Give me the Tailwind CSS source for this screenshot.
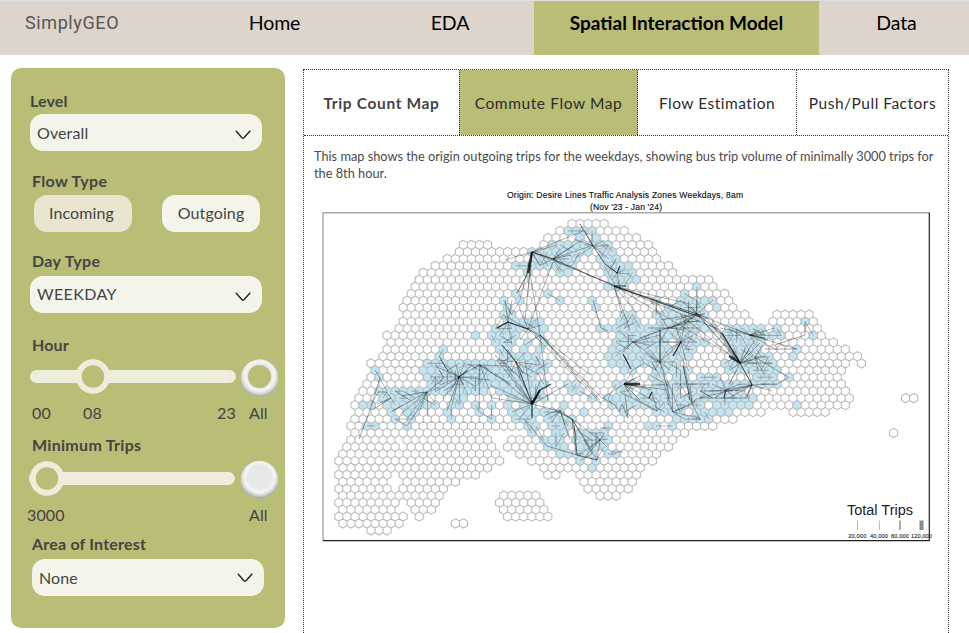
<!DOCTYPE html>
<html lang="en">
<head>
<meta charset="utf-8">
<title>SimplyGEO</title>
<script src="https://cdn.jsdelivr.net/npm/@tailwindcss/browser@4"></script>
</head>
<body class="w-[969px] h-[633px] overflow-hidden bg-white font-['Lato',sans-serif] text-[#444]">
<header class="flex h-[55px] border-t border-[#dcdfe2] bg-[#ddd4cb] text-[20px] leading-[43px] text-black">
  <div class="w-[183px] pl-[25px] font-['Roboto',sans-serif] text-[18px] tracking-[0.6px] text-[#585653]">SimplyGEO</div>
  <nav class="flex flex-1">
    <a class="w-[182px] pl-[1px] text-center text-[19.5px] tracking-[-0.1px]">Home</a>
    <a class="w-[169px] pl-[1px] text-center text-[19.5px] tracking-[-0.1px]">EDA</a>
    <a class="h-[54px] w-[285px] bg-[#babd76] text-center text-[19px] font-bold">Spatial Interaction Model</a>
    <a class="w-[150px] pl-[5px] text-center text-[19.5px] tracking-[-0.1px]">Data</a>
  </nav>
</header>
<main class="flex items-start pt-[13px]">
  <aside class="ml-[11px] flex h-[560px] w-[274px] flex-col rounded-[10px] bg-[#babd76] pl-[19px] pt-[21px] text-[16px] leading-[24px] tracking-[0.12px]">
    <div class="h-[25px] font-bold">Level</div>
    <div class="flex h-[37px] w-[232px] items-center justify-between rounded-[13px] bg-[#f5f4ea] pl-[7px] pr-[11px]"><span>Overall</span><svg class="mt-[4px] h-[10px] w-[16px]" viewBox="0 0 16 10" fill="none" stroke="#222" stroke-width="1.4"><path d="M.8 .8L7 7.7q1 .9 2 0L15.2 .8"/></svg></div>
    <div class="mt-[18px] h-[26px] pl-[2px] font-bold tracking-[0.35px]">Flow Type</div>
    <div class="ml-[4px] flex h-[37px] gap-[30px] text-center leading-[36px]"><div class="w-[98px] rounded-[13px] bg-[#e8e6ce] pr-[3px]">Incoming</div><div class="w-[98px] rounded-[13px] bg-[#f5f4ea]">Outgoing</div></div>
    <div class="mt-[17px] h-[27px] pl-[2px] font-bold tracking-[0.35px]">Day Type</div>
    <div class="flex h-[37px] w-[232px] items-center justify-between rounded-[13px] bg-[#f5f4ea] pl-[7px] pr-[11px]"><span class="-mt-[2px] tracking-[0.4px]">WEEKDAY</span><svg class="mt-[4px] h-[10px] w-[16px]" viewBox="0 0 16 10" fill="none" stroke="#222" stroke-width="1.4"><path d="M.8 .8L7 7.7q1 .9 2 0L15.2 .8"/></svg></div>
    <div class="mt-[20px] h-[24px] pl-[2px] font-bold">Hour</div>
    <svg class="h-[42px] w-[255px] shrink-0" viewBox="30 357 255 42">
      <defs><radialGradient id="bevel" cx=".5" cy=".44" r=".57"><stop offset=".55" stop-color="#e8e8e8"/><stop offset=".7" stop-color="#f5f5f5"/><stop offset=".84" stop-color="#d8d8d8"/><stop offset="1" stop-color="#9b9ba3"/></radialGradient></defs>
      <rect x="30" y="370" width="206" height="13" rx="6.5" fill="#efecdc"/><circle cx="93" cy="376.5" r="14.2" fill="#babd76" stroke="#efecdc" stroke-width="6"/>
      <circle cx="259.5" cy="378" r="18.7" fill="url(#bevel)"/><circle cx="259.5" cy="376.5" r="11.5" fill="#babd76"/>
    </svg>
    <div class="-mt-[1px] flex h-[30px] items-center"><span class="w-[51px] pl-[2px]">00</span><span class="w-[136px] pl-[2px]">08</span><span class="w-[32px]">23</span><span>All</span></div>
    <div class="mt-[5px] h-[25px] pl-[2px] font-bold tracking-[0.3px]">Minimum Trips</div>
    <svg class="-ml-[2px] h-[42px] w-[257px] shrink-0" viewBox="28 458 257 42">
      <rect x="29" y="472" width="206" height="13" rx="6.5" fill="#efecdc"/><circle cx="47" cy="478.5" r="14.2" fill="#babd76" stroke="#efecdc" stroke-width="6"/>
      <circle cx="259.5" cy="479.5" r="18.7" fill="url(#bevel)"/>
    </svg>
    <div class="-mt-px flex h-[32px] items-center"><span class="-ml-[3px] w-[222px]">3000</span><span>All</span></div>
    <div class="mt-[1px] h-[27px] pl-[2px] font-bold tracking-[0.2px]">Area of Interest</div>
    <div class="ml-[2px] flex h-[37px] w-[232px] items-center justify-between rounded-[13px] bg-[#f5f4ea] pl-[7px] pr-[11px]"><span>None</span><svg class="mt-[1px] h-[10px] w-[16px]" viewBox="0 0 16 10" fill="none" stroke="#222" stroke-width="1.4"><path d="M.8 .8L7 7.7q1 .9 2 0L15.2 .8"/></svg></div>
  </aside>
  <section class="ml-[18px] mt-px h-[570px] w-[646px] border border-dotted border-[#333]">
    <div class="flex h-[66px] border-b border-dotted border-[#333] text-center text-[15.5px] leading-[67px] tracking-[0.5px] text-[#2c2c2c]">
      <div class="w-[155px] font-bold text-[#444] tracking-[0.65px]">Trip Count Map</div>
      <div class="w-[179px] border-x border-dotted border-[#333] bg-[#babd76] tracking-[0.6px]">Commute Flow Map</div>
      <div class="w-[159px] border-r border-dotted border-[#333]">Flow Estimation</div>
      <div class="flex-1 whitespace-nowrap">Push/Pull Factors</div>
    </div>
    <p class="ml-[10px] h-[50px] origin-left scale-x-[0.912] whitespace-nowrap pt-[11px] text-[14px] leading-[17px] text-[#4a4a4a]">This map shows the origin outgoing trips for the weekdays, showing bus trip volume of minimally 3000 trips for<br>the 8th hour.</p>
    <svg class="block h-[365px] w-[644px]" viewBox="304 186 644 365">
      <g font-family="Liberation Sans, sans-serif" font-size="8.5" fill="#111" stroke="#111" stroke-width=".15" text-anchor="middle"><text x="625" y="198" textLength="236">Origin: Desire Lines Traffic Analysis Zones Weekdays, 8am</text><text x="626" y="210" textLength="72">(Nov '23 - Jan '24)</text></g>
      <path d="M323 541V212.8H929" fill="none" stroke="#aaa" stroke-width="1.5"/><path d="M323 540.7H929.3V212.5" fill="none" stroke="#222" stroke-width="1.2"/>
      <g id="cells" stroke="#bcbcbc" stroke-width="1.1"></g>
      <g id="flows" fill="none" stroke="#000" stroke-linecap="butt"></g>
      <g font-family="Liberation Sans, sans-serif" fill="#222"><text x="847" y="515" font-size="14" textLength="66" lengthAdjust="spacingAndGlyphs">Total Trips</text>
      <g font-size="5.7" text-anchor="middle" stroke="#222" stroke-width=".1"><text x="857.3" y="538" textLength="18">20,000</text><text x="879" y="538" textLength="18">40,000</text><text x="900" y="538" textLength="18">80,000</text><text x="921.5" y="538" textLength="21">120,000</text></g></g>
      <g stroke="#888"><path d="M857.5 520.5V530M879.3 520.5V530" stroke-width=".6"/><path d="M900 520.5V530" stroke-width="1.4"/><path d="M921.5 520.5V530" stroke-width="4"/></g>
    </svg>
  </section>
</main>
<script>
// Each entry is one row of the hexagon grid: x ranges of cell centres, from-to.
const land = `572-605
560-625
548-637
464-488 544-648
460-652
448-656
436-668
424-672
420-709
416-713
412-725
408-729
404-733
408-745 777-809
404-749 773-813
400-817
388-821
392-833
388-845
384-857
372-845 861-861
376-845
372-841
368-845
364-848
360-849 905-913
356-846
360-761 793-825
356-733
352-713
356-480 531-688 893-893
352-394 408-484 511-674
348-396 410-492 507-669
344-496 520-660
339-500 532-655
344-391 400-488 544-643
339-388 404-476 548-556 580-639
344-387 404-456 583-635
339-388 404-444 588-628
344-396 408-440 504-536 600-617
339-396 412-436 500-540
344-392 416-432 504-544
339-404 420-420 508-548
344-400 456-464
372-388`.split('\n');
const active = `
568-593
580-580 597-597
552-568 577-609
533-590 601-613
532-577 597-617
516-524 533-568 605-625
528-528 560-568 605-633
609-637
609-625 697-697
516-516 548-548 684-684
504-504 520-520 560-560 593-593 655-655 684-713
508-508 597-597 665-700 717-717
504-512 624-631 655-705
508-540 620-636 661-701 805-805
496-516 524-540 600-600 612-632 644-709 729-761 777-777
476-476 492-516 543-543 617-690 725-773 781-781 813-813
496-515 528-528 540-540 613-665 680-693 705-705 729-758
444-444 502-508 520-524 540-540 609-617 628-665 677-690 729-760 797-797
440-440 502-536 612-632 644-687 733-770 793-793
427-443 451-485 492-510 520-544 612-636 644-680 725-773
376-376 423-542 628-636 656-690 725-777
380-380 427-480 492-532 656-661 673-687 704-717 758-772 788-788
435-486 496-540 568-577 617-630 660-680 688-758 770-778
380-396 404-440 448-485 501-532 540-540 572-580 622-632 644-680 693-744
384-420 452-460 508-544 593-593 611-630 640-667 675-753
363-363 371-371 388-404 412-436 452-460 476-476 492-492 508-508 524-532 564-564 615-630 640-646 656-703 715-750 797-797
392-392 408-416 448-448 480-480 513-556 583-583 625-625 654-677 693-729
396-396 408-408 452-452 492-492 512-528 550-573 677-677 685-710
368-376 408-408 528-536 552-568 606-606 648-658 672-672
532-532 553-560 577-605
544-560 575-610
548-565 577-603
560-586 592-592 608-617
580-580 596-596
592-592`.split('\n');
const NS = 'http://www.w3.org/2000/svg', DX = 8.04, DY = 6.965;
const ranges = s => s.split(' ').map(v => v.split('-').map(Number));
const lit = [];
let white = '', blue = '';
land.forEach((row, r) => {
  const y = 224 + r * DY, x0 = 338.8 + (r % 2 ? DX / 2 : 0);
  const on = active[r] ? ranges(active[r]) : [];
  for (const [a, b] of ranges(row))
    for (let k = Math.round((a - x0) / DX); k <= Math.round((b - x0) / DX); k++) {
      const x = x0 + k * DX;
      const d = `M${x.toFixed(1)} ${(y - 4.65).toFixed(1)}l4.02 2.32v4.65l-4.02 2.32l-4.02 -2.32v-4.65z`;
      if (on.some(([p, q]) => x > p - 4 && x < q + 4)) { blue += d; lit.push([x, y]); } else white += d;
    }
});
function add(id, d, attrs) {
  const p = document.createElementNS(NS, 'path');
  p.setAttribute('d', d);
  for (const k in attrs) p.setAttribute(k, attrs[k]);
  document.getElementById(id).append(p);
}
add('cells', white, {fill: '#fff'});
add('cells', blue, {fill: '#c0e5f3'});

// Short local trips between nearby active zones.
let seed = 17, local = '';
const rnd = () => (seed = (seed * 16807) % 2147483647) / 2147483647;
for (const [x, y] of lit) {
  if (rnd() > .45) continue;
  const near = lit.filter(([u, v]) => { const h = Math.hypot(u - x, v - y); return h > 6 && h < 19; });
  if (near.length) { const t = near[Math.floor(rnd() * near.length)]; local += `M${x} ${y}L${t[0]} ${t[1]}`; }
}
add('flows', local, {'stroke-width': .6, opacity: .45});

// Hub followed by the ends of its spokes.
const hubs = `553,259 569,259 574,245 583,239 593,245 562,265 571,255 560,249 541,265 562,272 532,252
532,252 583,231 540,265 557,245 528,290 520,300 525,320 614,285 505,260
593,246 574,239 608,246 600,252 609,259 575,258 585,230 605,240
617,273 605,264 625,270 610,265 630,274 620,290 612,280
614,286 636,312 630,330 622,314 700,317 735,358 697,314 720,330 655,300 690,304
528,329 540,335 505,316 520,310 535,320 541,325 508,322 520,340 603,405 553,262 541,338
540,335 600,400 590,375 548,400 575,375 528,260 525,345
508,322 528,329 512,345 500,335 505,300 512,300 497,328
516,362 502,345 532,403 508,350 525,352 540,375 497,360 520,378 508,378 540,365
532,404 497,360 495,373 505,365 516,362 490,385 492,398 505,395 512,412 520,418 515,385 540,395 568,384 525,360 541,378 555,410 520,372
459,377 435,366 440,360 447,370 465,362 471,366 480,364 478,377 475,386 468,395 460,404 452,405 447,411 443,399 440,385 430,377 435,392 456,365 467,370 450,392 490,380
427,392 392,411 400,415 408,418 412,420 428,417 436,404 402,396 415,393 440,387 420,410 444,378
480,365 472,370 478,386 479,410 492,398 490,370 465,365 498,377 510,385 505,366
560,410 545,415 570,440 552,422 565,425 572,419
572,419 577,440 576,455 590,447 597,460 600,440
600,440 608,439 597,460 585,457 604,435 607,447 583,440 595,433 577,456 588,450
633,342 617,330 660,335 681,342 620,352 623,352 660,362 660,330 616,341 640,348 627,333 650,345
681,342 662,342 690,330 686,315 697,342 673,356 687,365 676,327 670,333 689,350 660,362
660,362 650,350 660,330 668,350 650,362 676,362 655,370 670,370 680,412 670,398 645,353
697,314 680,300 713,300 697,287 707,318 655,300 675,320 680,328 660,320 671,328 690,306 740,362 735,358 725,337 717,329 750,335
668,328 650,300 700,320 685,330 655,330 690,321 660,342 640,338 705,313
740,363 720,330 713,321 707,318 752,360 765,356 772,363 749,350 755,340 760,343 730,370 729,385 752,385 680,314 733,345 745,348
750,335 720,328 764,334 775,328 760,330 797,349 742,328 755,345 777,350 735,329 768,340
755,357 748,350 768,357 765,376 758,370 763,345 745,366 788,377
726,390 712,384 720,378 733,383 740,384 752,385 724,398 715,398 745,391 735,397 709,391
752,385 745,398 729,398 700,398 748,370 772,391 735,391 765,384
624,384 636,378 652,390 640,400 667,390 657,403 603,398 640,376 645,387
657,411 652,392 664,402 635,398 620,392
668,385 640,385 668,405 665,380 650,375
692,403 683,360 700,420 673,412 697,398 680,384 705,395 690,384
673,412 700,418 695,403 664,384 668,403`;
let spokes = '';
for (const line of hubs.split('\n')) { const [h, ...e] = line.split(' '); for (const p of e) spokes += `M${h}L${p}`; }
add('flows', spokes, {'stroke-width': .55, opacity: .55});
add('flows', 'M375 370L380 378L370 410L359 439M378 392H386L391 398L377 404M391 398L372 410M395 391L410 400M525 420L547 446L577 455M603 398L615 405L619 412L622 404L628 418L625 395M540 335L603 399M805 322V335L775 345M765 349H797M593 300L601 328L608 331M612 452H623M600 428H610M648 328H700M673 384H710M700 391H733M700 398H750M504 362L520 378L527 391M495 355L514 373', {'stroke-width': .6, opacity: .6});
add('flows', 'M532 252L553 259L614 286L700 317M580 224L593 246L605 264L617 273M528 273L517 293M508 322L528 329M502 345L516 362M516 362L523 373M555 410L572 419M597 460L577 455L574 425M740 363L752 385L747 397M750 335L765 338M726 390L724 397M660 330V362M683 365L690 400M459 377L467 371', {'stroke-width': .8, opacity: .7});
add('flows', 'M508 322L497 328M532 404L540 390L551 384M532 400V418M614 286H626M617 273L620 266M623 354L631 369M681 342L673 356M652 392L649 398M740 363L722 333', {'stroke-width': 1.2, opacity: .75});
add('flows', 'M532 252L528 273M532 404L540 390M740 363L729 356M624 384H640', {'stroke-width': 2.4, opacity: .75});
</script>
</body>
</html>
